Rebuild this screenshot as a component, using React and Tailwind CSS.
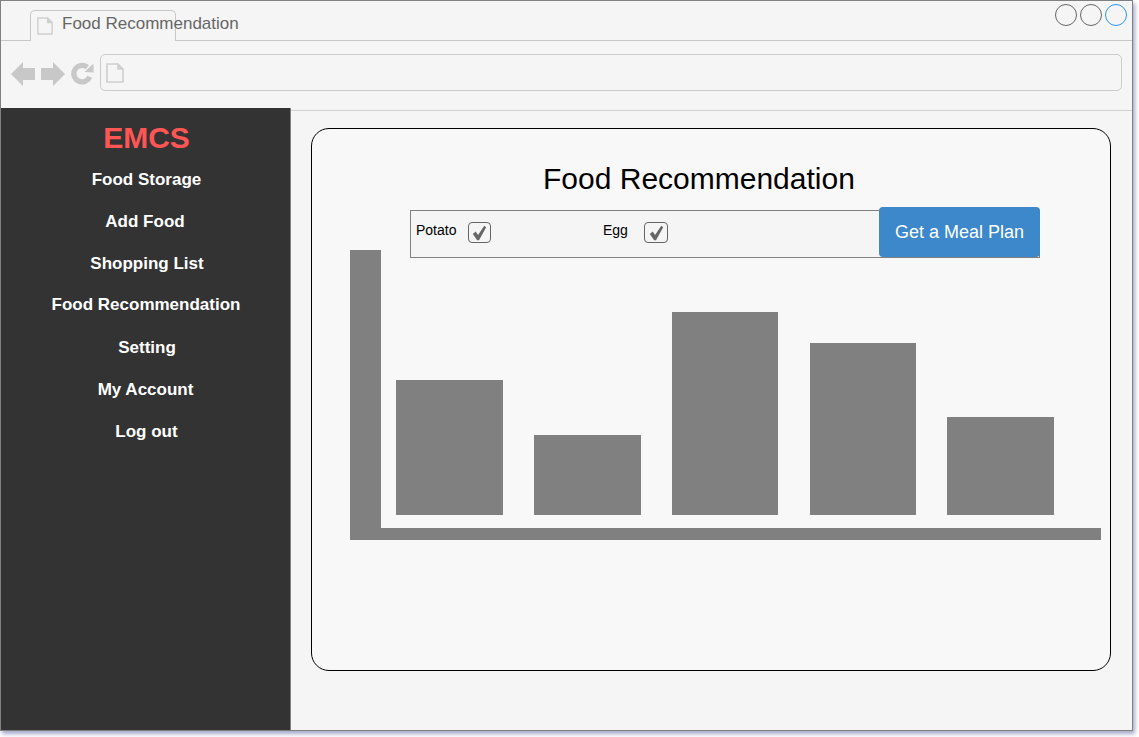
const navItems = [
  { label: "Food Storage", cls: "h-[42px] pl-[2px]" },
  { label: "Add Food", cls: "h-[42px] pr-[1px]" },
  { label: "Shopping List", cls: "h-[42px] pl-[3px]" },
  { label: "Food Recommendation", cls: "h-[41px] pl-[1px] pb-[2px]" },
  { label: "Setting", cls: "h-[43px] pl-[3px]" },
  { label: "My Account", cls: "h-[42px]" },
  { label: "Log out", cls: "h-[42px] pl-[2px]" },
];

const bars = [
  "w-[107px] h-[135px] mr-[31px]",
  "w-[107px] h-[80px] mr-[31px]",
  "w-[106px] h-[203px] mr-[32px]",
  "w-[106px] h-[172px] mr-[31px]",
  "w-[107px] h-[98px]",
];

function PageIcon({ className }) {
  return (
    <svg viewBox="0 0 18 20" className={`shrink-0 ${className}`} fill="none" stroke="#cfcfcf" strokeWidth="1.6">
      <path d="M1 1h11l5 5v13H1z" />
      <path d="M12 1v5h5" fill="#cfcfcf" />
    </svg>
  );
}

function Arrow({ flip }) {
  return (
    <svg viewBox="0 0 24 24" className={`w-[24px] h-[24px] mt-[2px] ${flip ? "rotate-180" : ""}`} fill="#c8c8c8">
      <path d="M0 12 12 0v6h12v12H12v6z" />
    </svg>
  );
}

function FoodCheck({ label, labelCls, boxCls }) {
  return (
    <div className="flex items-start">
      <span className={`text-[14px] leading-[16px] text-black ${labelCls}`}>{label}</span>
      <span className={`flex items-center justify-center h-[21px] bg-[#f5f5f5] border border-[#666666] rounded-[4px] ${boxCls}`}>
        <svg viewBox="0 0 23 22" className="w-[23px] h-[21px] shrink-0" fill="#666666">
          <path d="M4.5 12.5 7.5 10 10 13.5 16.5 4 18.5 5.5 11 19H9z" />
        </svg>
      </span>
    </div>
  );
}

export default function App() {
  return (
    <div className="w-[1139px] h-[737px] bg-white font-['Liberation_Sans',Arial,sans-serif]">
      <div className="flex flex-col w-[1133px] h-[731px] bg-[#f5f5f5] border border-[#808080] shadow-[2px_3px_4px_rgba(90,100,160,0.55)]">
        {/* Tab strip */}
        <div className="flex items-end justify-between h-[40px] shrink-0 border-b border-[#c8c8c8]">
          <div className="relative flex -mb-px ml-[29px] w-[146px] h-[31px] bg-[#f5f5f5] border border-b-0 border-[#c8c8c8] rounded-t-[5px]">
            <PageIcon className="w-[16px] h-[20px] ml-[6px] mt-[5px]" />
            <span className="ml-[9px] mt-[2px] text-[17px] leading-[22px] whitespace-nowrap text-[#666666]">Food Recommendation</span>
          </div>
          <div className="flex gap-[3px] self-start mt-[3px] mr-[5px]">
            <span className="w-[22px] h-[22px] rounded-full border border-[#666666]" />
            <span className="w-[22px] h-[22px] rounded-full border border-[#666666]" />
            <span className="w-[22px] h-[22px] rounded-full border border-[#2b96f0]" />
          </div>
        </div>

        {/* Toolbar */}
        <div className="flex items-center h-[70px] shrink-0 pl-[10px] pr-[10px] pb-[6px] border-b border-[#d0d0d0]">
          <Arrow />
          <span className="ml-[6px]"><Arrow flip /></span>
          <svg viewBox="0 0 24 24" className="ml-[6px] mt-[2px] w-[23px] h-[23px]" fill="none">
            <path d="M19.5 15.5A8.6 8.6 0 1 1 17 5.5" stroke="#c8c8c8" strokeWidth="5.5" />
            <path d="M14 10.5 23.5 11V1.5z" fill="#c8c8c8" />
          </svg>
          <div className="flex items-center flex-1 h-[37px] ml-[6px] pl-[5px] border border-[#cccccc] rounded-[5px]">
            <PageIcon className="w-[18px] h-[20px]" />
          </div>
        </div>

        <div className="flex flex-1 min-h-0 -mt-[3px] z-10">
          {/* Sidebar */}
          <aside className="flex flex-col items-center w-[290px] shrink-0 bg-[#333333] border-r border-[#808080] text-white font-bold">
            <h1 className="h-[51px] pt-[13px] pl-[2px] text-[30px] leading-[34px] text-[#ff5555]">EMCS</h1>
            {navItems.map((item) => (
              <a key={item.label} className={`flex items-center text-[17px] leading-[20px] ${item.cls}`}>
                {item.label}
              </a>
            ))}
          </aside>

          {/* Main */}
          <main className="flex-1 pt-[20px] pl-[20px]">
            <section className="flex flex-col w-[800px] h-[543px] bg-[#f8f8f8] border border-black rounded-[18px]">
              <h2 className="mt-[32px] ml-[231px] text-[30px] leading-[36px] text-black whitespace-nowrap">Food Recommendation</h2>
              <div className="flex justify-between ml-[98px] mt-[13px] w-[630px] h-[48px] bg-[#f5f5f5] border border-[#808080]">
                <div className="flex pt-[11px] pl-[5px]">
                  <FoodCheck label="Potato" labelCls="w-[52px]" boxCls="w-[23px]" />
                  <div className="ml-[112px]">
                    <FoodCheck label="Egg" labelCls="w-[41px]" boxCls="w-[24px]" />
                  </div>
                </div>
                <button className="self-start w-[161px] h-[50px] -mt-[4px] -mr-px bg-[#3d87cb] rounded-[4px] text-[18px] text-white">
                  Get a Meal Plan
                </button>
              </div>
              {/* Chart */}
              <div className="flex items-end ml-[38px] mt-[-8px] w-[751px] h-[290px] pl-[15px] pb-[13px] border-l-[31px] border-b-[12px] border-[#808080]">
                {bars.map((cls, i) => (
                  <div key={i} className={`bg-[#808080] ${cls}`} />
                ))}
              </div>
            </section>
          </main>
        </div>
      </div>
    </div>
  );
}
